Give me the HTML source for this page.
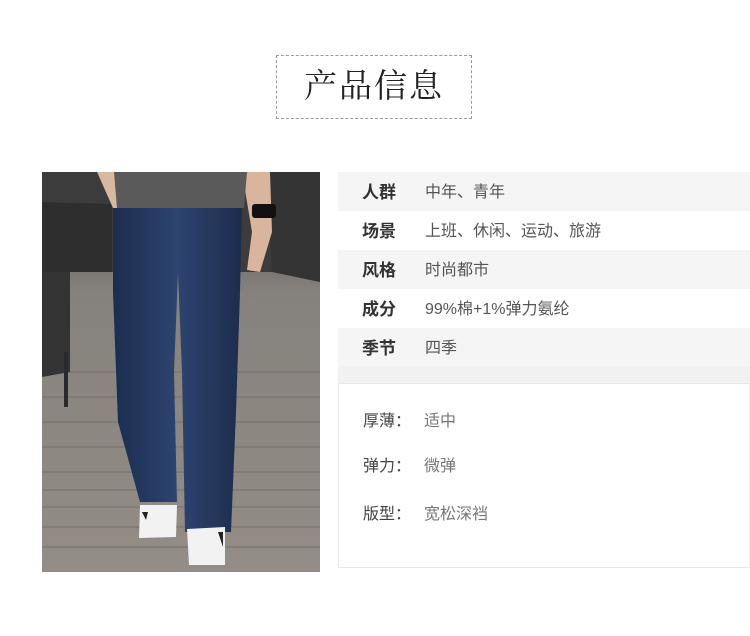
<!DOCTYPE html>
<html><head><meta charset="utf-8"><style>
body{margin:0;width:750px;height:636px;background:#fff;position:relative;overflow:hidden;font-family:"Liberation Sans","Noto Sans CJK SC",sans-serif}
.title{position:absolute;left:276px;top:55px;width:194px;height:62px;border:1px dashed #999;text-align:center;line-height:62px;font-family:"Liberation Serif","Noto Serif CJK SC",serif;font-size:33px;color:#222;letter-spacing:2px}
.photo{position:absolute;left:42px;top:172px;width:278px;height:400px}
.tbl{position:absolute;left:338px;top:172px;width:412px}
.row{height:39px;line-height:42px;position:relative}
.row.g{background:#f5f5f5}
.row b{position:absolute;left:24px;font-size:17px;color:#333}
.row span{position:absolute;left:87px;font-size:16px;color:#555}
.bar{height:17px;background:#f1f1f1}
.box{position:absolute;left:338px;top:383px;width:410px;height:183px;border:1px solid #e8e8e8;background:#fff}
.it{position:absolute;left:24px;font-size:16px;color:#444}
.it span{position:absolute;left:61px;color:#777;white-space:nowrap}
</style></head><body>
<div class="title">产品信息</div>
<svg class="photo" viewBox="0 0 278 400" width="278" height="400">
<defs>
<linearGradient id="fl" x1="0" y1="0" x2="0" y2="1"><stop offset="0" stop-color="#4a4a4a"/><stop offset="0.3" stop-color="#85817c"/><stop offset="1" stop-color="#948d86"/></linearGradient>
<linearGradient id="jn" x1="0" y1="0" x2="1" y2="0"><stop offset="0" stop-color="#1c2d4e"/><stop offset="0.5" stop-color="#2d4470"/><stop offset="1" stop-color="#1c2c4c"/></linearGradient>
</defs>
<rect width="278" height="400" fill="url(#fl)"/>
<rect width="278" height="100" fill="#3c3c3c"/>
<g stroke="#6a655f" stroke-width="1" opacity="0.7">
<line x1="0" y1="200" x2="278" y2="200"/><line x1="0" y1="225" x2="278" y2="225"/><line x1="0" y1="250" x2="278" y2="250"/><line x1="0" y1="275" x2="278" y2="275"/><line x1="0" y1="300" x2="278" y2="300"/><line x1="0" y1="318" x2="278" y2="318"/><line x1="0" y1="335" x2="278" y2="335"/><line x1="0" y1="355" x2="278" y2="355"/><line x1="0" y1="375" x2="278" y2="375"/>
</g>
<path d="M0 70 Q15 65 28 68 L28 200 L0 205 Z" fill="#333"/>
<path d="M0 30 L70 32 L70 100 L0 100Z" fill="#2e2e2e"/>
<rect x="22" y="180" width="4" height="55" fill="#2a2a2a"/>
<path d="M225 0 L278 0 L278 110 L230 100Z" fill="#333"/>
<path d="M55 0 L90 0 L92 40 L75 45 Z" fill="#d9b8a0"/>
<path d="M200 0 L228 0 L230 60 L218 100 L205 98 L210 60 Z" fill="#d8b59c"/>
<rect x="210" y="32" width="24" height="14" rx="3" fill="#111"/>
<path d="M72 0 L205 0 L202 36 L75 36 Z" fill="#5a5a5a"/>
<path d="M71 36 L200 36 L198 120 L194 240 L189 360 L143 360 L140 200 L136 100 L132 200 L135 330 L98 330 L76 250 L71 120 Z" fill="url(#jn)"/>
<path d="M98 333 L135 333 L134 365 L97 366 Z" fill="#f2f2f2"/>
<path d="M145 357 L183 355 L183 393 L147 393 Z" fill="#f2f2f2"/>
<path d="M100 340 L106 340 L104 348Z M176 360 L181 360 L181 375Z" fill="#222"/>
</svg>
<div class="tbl">
<div class="row g"><b>人群</b><span>中年、青年</span></div>
<div class="row"><b>场景</b><span>上班、休闲、运动、旅游</span></div>
<div class="row g"><b>风格</b><span>时尚都市</span></div>
<div class="row"><b>成分</b><span>99%棉+1%弹力氨纶</span></div>
<div class="row g" style="height:38px"><b>季节</b><span>四季</span></div>
<div class="bar"></div>
</div>
<div class="box">
<div class="it" style="top:23px">厚薄：<span>适中</span></div>
<div class="it" style="top:68px">弹力：<span>微弹</span></div>
<div class="it" style="top:116px">版型：<span>宽松深裆</span></div>
</div>
</body></html>
